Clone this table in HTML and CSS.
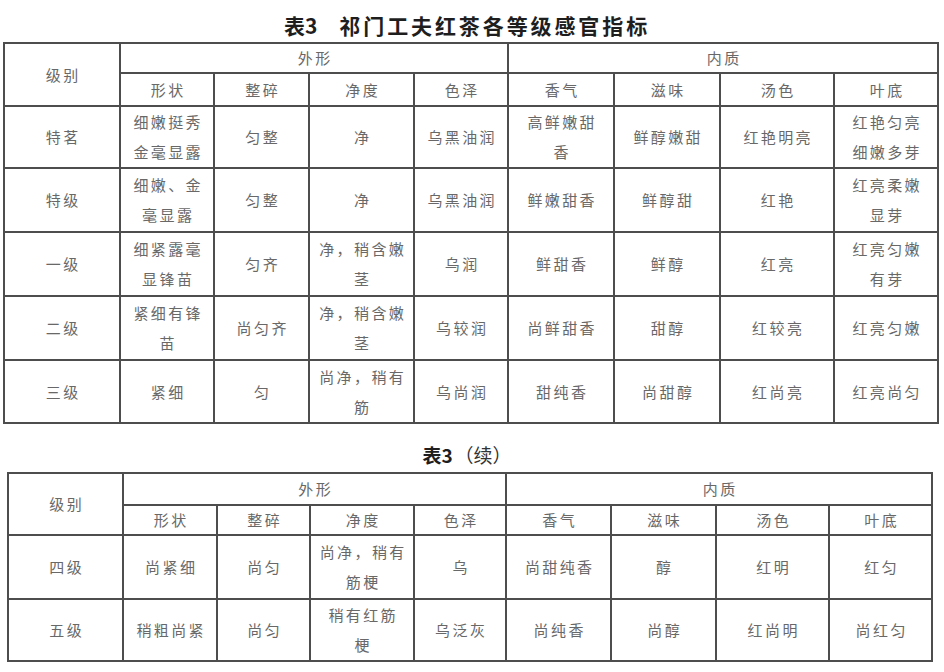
FILE: index.html
```html
<!DOCTYPE html>
<html lang="zh-CN">
<head>
<meta charset="utf-8">
<title>祁门工夫红茶各等级感官指标</title>
<link rel="stylesheet" href="styles.css">
</head>
<body>
<div class="page">
  <h1 class="title title-main"><span class="num">表3</span><span class="name">祁门工夫红茶各等级感官指标</span></h1>
  <table class="grid grid-1">
    <colgroup>
      <col style="width:116px"><col style="width:94px"><col style="width:95px"><col style="width:105px"><col style="width:94px">
      <col style="width:106px"><col style="width:106px"><col style="width:114px"><col style="width:104px">
    </colgroup>
    <tr class="h1">
      <td rowspan="2">级别</td>
      <td colspan="4" class="grp grp-a">外形</td>
      <td colspan="4" class="grp grp-b">内质</td>
    </tr>
    <tr class="h2">
      <td>形状</td><td>整碎</td><td>净度</td><td>色泽</td>
      <td>香气</td><td>滋味</td><td>汤色</td><td>叶底</td>
    </tr>
    <tr class="r r62">
      <td>特茗</td><td>细嫩挺秀<br>金毫显露</td><td>匀整</td><td>净</td><td>乌黑油润</td>
      <td>高鲜嫩甜<br>香</td><td>鲜醇嫩甜</td><td>红艳明亮</td><td>红艳匀亮<br>细嫩多芽</td>
    </tr>
    <tr class="r">
      <td>特级</td><td>细嫩、金<br>毫显露</td><td>匀整</td><td>净</td><td>乌黑油润</td>
      <td>鲜嫩甜香</td><td>鲜醇甜</td><td>红艳</td><td>红亮柔嫩<br>显芽</td>
    </tr>
    <tr class="r">
      <td>一级</td><td>细紧露毫<br>显锋苗</td><td>匀齐</td><td>净，稍含嫩<br>茎</td><td>乌润</td>
      <td>鲜甜香</td><td>鲜醇</td><td>红亮</td><td>红亮匀嫩<br>有芽</td>
    </tr>
    <tr class="r">
      <td>二级</td><td>紧细有锋<br>苗</td><td>尚匀齐</td><td>净，稍含嫩<br>茎</td><td>乌较润</td>
      <td>尚鲜甜香</td><td>甜醇</td><td>红较亮</td><td>红亮匀嫩</td>
    </tr>
    <tr class="r r63">
      <td>三级</td><td>紧细</td><td>匀</td><td>尚净，稍有<br>筋</td><td>乌尚润</td>
      <td>甜纯香</td><td>尚甜醇</td><td>红尚亮</td><td>红亮尚匀</td>
    </tr>
  </table>

  <h2 class="title title-cont"><span class="num">表3</span><span class="cont">（续）</span></h2>
  <table class="grid grid-2">
    <colgroup>
      <col style="width:115px"><col style="width:94px"><col style="width:93px"><col style="width:104px"><col style="width:92px">
      <col style="width:105px"><col style="width:105px"><col style="width:113px"><col style="width:103px">
    </colgroup>
    <tr class="h1 h1b">
      <td rowspan="2">级别</td>
      <td colspan="4" class="grp grp-a">外形</td>
      <td colspan="4" class="grp grp-b">内质</td>
    </tr>
    <tr class="h2 h2b">
      <td>形状</td><td>整碎</td><td>净度</td><td>色泽</td>
      <td>香气</td><td>滋味</td><td>汤色</td><td>叶底</td>
    </tr>
    <tr class="r">
      <td>四级</td><td>尚紧细</td><td>尚匀</td><td>尚净，稍有<br>筋梗</td><td>乌</td>
      <td>尚甜纯香</td><td>醇</td><td>红明</td><td>红匀</td>
    </tr>
    <tr class="r r61">
      <td>五级</td><td>稍粗尚紧</td><td>尚匀</td><td>稍有红筋<br>梗</td><td>乌泛灰</td>
      <td>尚纯香</td><td>尚醇</td><td>红尚明</td><td>尚红匀</td>
    </tr>
  </table>
</div>
</body>
</html>
```

FILE: styles.css
```css
html, body {
  margin: 0;
  padding: 0;
  background: #ffffff;
}

body {
  width: 944px;
  height: 672px;
  overflow: hidden;
  font-family: "Noto Sans CJK SC", "Noto Sans", sans-serif;
}

.page {
  display: flex;
  flex-direction: column;
  align-items: flex-start;
}

.title {
  align-self: stretch;
  margin: 0;
  text-align: center;
  color: #1e1e1e;
  font-family: "Noto Sans CJK SC", "Noto Sans", sans-serif;
  font-weight: 700;
  padding-right: 10px;
}

.title-main {
  height: 42px;
  box-sizing: border-box;
  padding-top: 8px;
  font-size: 21px;
  line-height: 34px;
  letter-spacing: 2.9px;
}

.title-main .num {
  margin-right: 22px;
  letter-spacing: 0;
}

.title-cont {
  height: 48px;
  box-sizing: border-box;
  padding-top: 16px;
  font-size: 19px;
  line-height: 30px;
}

.title-cont .cont {
  font-weight: 400;
  color: #333;
  margin-left: 2px;
}

.grid {
  border-collapse: collapse;
  table-layout: fixed;
  font-family: "Noto Sans CJK SC", "Noto Sans", sans-serif;
  font-size: 15px;
  font-weight: 400;
  color: #686868;
  letter-spacing: 2.4px;
}

.grid-1 {
  width: 934px;
  margin-left: 3px;
}

.grid-2 {
  width: 924px;
  margin-left: 7px;
}

.grid td {
  border: 2px solid #4d4d4d;
  padding: 0 0 0 2.4px;
  text-align: center;
  vertical-align: middle;
  line-height: 30px;
  white-space: nowrap;
}

.h1 { height: 30px; }
.h2 { height: 33px; }
.h1b { height: 32px; }
.h2b { height: 30px; }

.h1 td, .h2 td { line-height: 26px; }

.r { height: 64px; }
.r62 { height: 62px; }
.r63 { height: 63px; }
.r61 { height: 62px; }

.grp-a { padding-left: 36px; }
.grp-b { padding-right: 60px; }
```
